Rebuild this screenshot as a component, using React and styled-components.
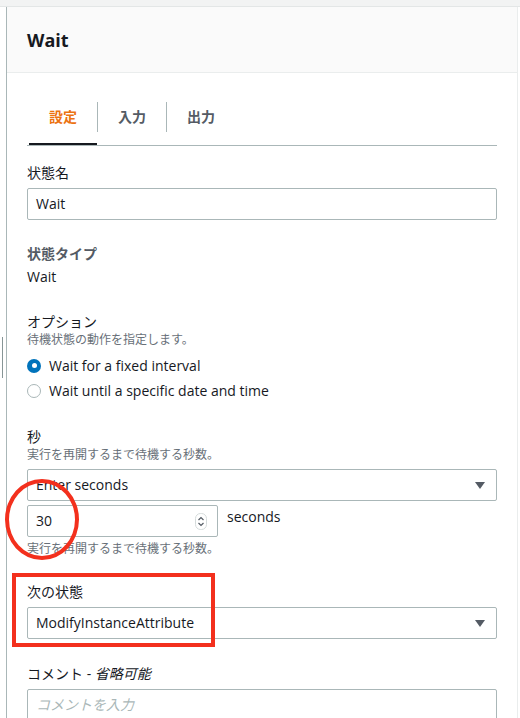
import React from 'react';
import styled, { createGlobalStyle } from 'styled-components';

const GlobalStyle = createGlobalStyle`
  html, body {
    margin: 0;
    padding: 0;
    background: #fff;
  }
  body {
    font-family: "Open Sans", "Noto Sans CJK JP", sans-serif;
    font-size: 14px;
    color: #16191f;
  }
  * {
    box-sizing: border-box;
  }
`;

const Page = styled.div`
  position: relative;
  width: 520px;
  height: 718px;
  overflow: hidden;
  background: #fff;
`;

const TopStrip = styled.div`
  height: 7px;
  background: #f2f3f3;
  border-bottom: 1px solid #e3e6e6;
`;

const Panel = styled.section`
  margin-left: 6px;
  width: 512px;
  min-height: 711px;
  border-left: 1px solid #aab7b8;
  border-right: 1px solid #eaeded;
`;

const Header = styled.header`
  height: 66px;
  display: flex;
  align-items: center;
  padding: 0 20px;
  background: #fafafa;
  border-bottom: 1px solid #eaeded;
  font-size: 18px;
  font-weight: 700;
`;

const Body = styled.div`
  padding: 29px 20px 0;
`;

const TabList = styled.div`
  display: flex;
  border-bottom: 1px solid #aab7b8;
`;

const Tab = styled.div`
  padding-bottom: 11px;
  border-bottom: 2px solid ${(p) => (p.$active ? '#16191f' : 'transparent')};
  &:first-child {
    margin-left: 2px;
  }
`;

const TabLabel = styled.span`
  display: block;
  padding: 4px 20px;
  line-height: 22px;
  font-weight: 700;
  color: ${(p) => (p.$active ? '#ec7211' : '#545b64')};
  border-left: ${(p) => (p.$first ? 'none' : '1px solid #aab7b8')};
`;

const Field = styled.div`
  margin-top: ${(p) => p.$mt}px;
`;

const Label = styled.div`
  font-size: 14px;
  line-height: 20px;
  color: ${(p) => (p.$strong ? '#545b64' : '#16191f')};
  font-weight: ${(p) => (p.$strong ? 700 : 400)};
  margin-bottom: ${(p) => (p.$mb ?? 0)}px;
  i {
    font-style: italic;
  }
`;

const Value = styled.div`
  margin-top: 2px;
  line-height: 22px;
`;

const Description = styled.div`
  font-size: 12px;
  line-height: 16px;
  color: #687078;
`;

const Box = styled.div`
  display: flex;
  align-items: center;
  justify-content: space-between;
  width: ${(p) => p.$width || '100%'};
  height: 32px;
  padding: 0 ${(p) => p.$pr ?? 11}px 0 8px;
  border: 1px solid #aab7b8;
  border-radius: 2px;
  background: #fff;
  line-height: 22px;
  margin-top: ${(p) => (p.$mt ?? 0)}px;
`;

const Placeholder = styled.span`
  color: #aab7b8;
  font-style: italic;
`;

const RadioGroup = styled.div`
  margin-top: 5px;
`;

const RadioRow = styled.label`
  display: flex;
  align-items: center;
  gap: 8px;
  height: 25px;
  line-height: 22px;
`;

const RadioDot = styled.span`
  position: relative;
  width: 14px;
  height: 14px;
  border-radius: 50%;
  flex: none;
  background: ${(p) => (p.$checked ? '#0073bb' : '#fff')};
  border: ${(p) => (p.$checked ? 'none' : '1px solid #aab7b8')};
  &::after {
    content: '';
    display: ${(p) => (p.$checked ? 'block' : 'none')};
    position: absolute;
    left: 4.5px;
    top: 4.5px;
    width: 5px;
    height: 5px;
    border-radius: 50%;
    background: #fff;
  }
`;

const NumberRow = styled.div`
  display: flex;
  align-items: flex-start;
  gap: 9px;
  margin-top: 4px;
`;

const Unit = styled.span`
  margin-top: 1px;
  line-height: 22px;
`;

const SubDescription = styled(Description)`
  margin-top: 4px;
`;

const Handle = styled.div`
  position: absolute;
  left: 2px;
  top: 337px;
  width: 1px;
  height: 41px;
  background: #879596;
`;

const RedCircle = styled.div`
  position: absolute;
  left: 5px;
  top: 479px;
  width: 74px;
  height: 81px;
  border: 4px solid #f3301d;
  border-radius: 50%;
`;

const RedBox = styled.div`
  position: absolute;
  left: 12px;
  top: 573px;
  width: 203px;
  height: 74px;
  border: 4px solid #f3301d;
`;

const Caret = () => (
  <svg width="10" height="7" viewBox="0 0 10 7">
    <path d="M0 0 H10 L5 7 Z" fill="#545b64" />
  </svg>
);

const Spinner = () => (
  <svg width="12" height="17" viewBox="0 0 12 17">
    <rect x="0.5" y="0.5" width="11" height="16" rx="5" fill="#fff" stroke="#d5dbdb" />
    <path d="M3.5 7 L6 4.5 L8.5 7" fill="none" stroke="#545b64" strokeWidth="1.2" />
    <path d="M3.5 10 L6 12.5 L8.5 10" fill="none" stroke="#545b64" strokeWidth="1.2" />
  </svg>
);

const tabs = ['設定', '入力', '出力'];

const App = () => {
  return (
    <Page>
      <GlobalStyle />
      <TopStrip />
      <Panel>
        <Header>Wait</Header>
        <Body>
          <TabList>
            {tabs.map((t, i) => (
              <Tab key={t} $active={i === 0}>
                <TabLabel $active={i === 0} $first={i === 0}>
                  {t}
                </TabLabel>
              </Tab>
            ))}
          </TabList>

          <Field $mt={17}>
            <Label $mb={5}>状態名</Label>
            <Box>Wait</Box>
          </Field>

          <Field $mt={24}>
            <Label $strong>状態タイプ</Label>
            <Value>Wait</Value>
          </Field>

          <Field $mt={24}>
            <Label>オプション</Label>
            <Description>待機状態の動作を指定します。</Description>
            <RadioGroup>
              <RadioRow>
                <RadioDot $checked />
                Wait for a fixed interval
              </RadioRow>
              <RadioRow>
                <RadioDot />
                Wait until a specific date and time
              </RadioRow>
            </RadioGroup>
          </Field>

          <Field $mt={24}>
            <Label>秒</Label>
            <Description>実行を再開するまで待機する秒数。</Description>
            <Box $mt={6}>
              Enter seconds
              <Caret />
            </Box>
            <NumberRow>
              <Box $width="191px" $pr={10}>
                30
                <Spinner />
              </Box>
              <Unit>seconds</Unit>
            </NumberRow>
            <SubDescription>実行を再開するまで待機する秒数。</SubDescription>
          </Field>

          <Field $mt={25}>
            <Label $mb={5}>次の状態</Label>
            <Box>
              ModifyInstanceAttribute
              <Caret />
            </Box>
          </Field>

          <Field $mt={25}>
            <Label $mb={5}>
              コメント - <i>省略可能</i>
            </Label>
            <Box>
              <Placeholder>コメントを入力</Placeholder>
            </Box>
          </Field>
        </Body>
      </Panel>
      <Handle />
      <RedCircle />
      <RedBox />
    </Page>
  );
};

export default App;
